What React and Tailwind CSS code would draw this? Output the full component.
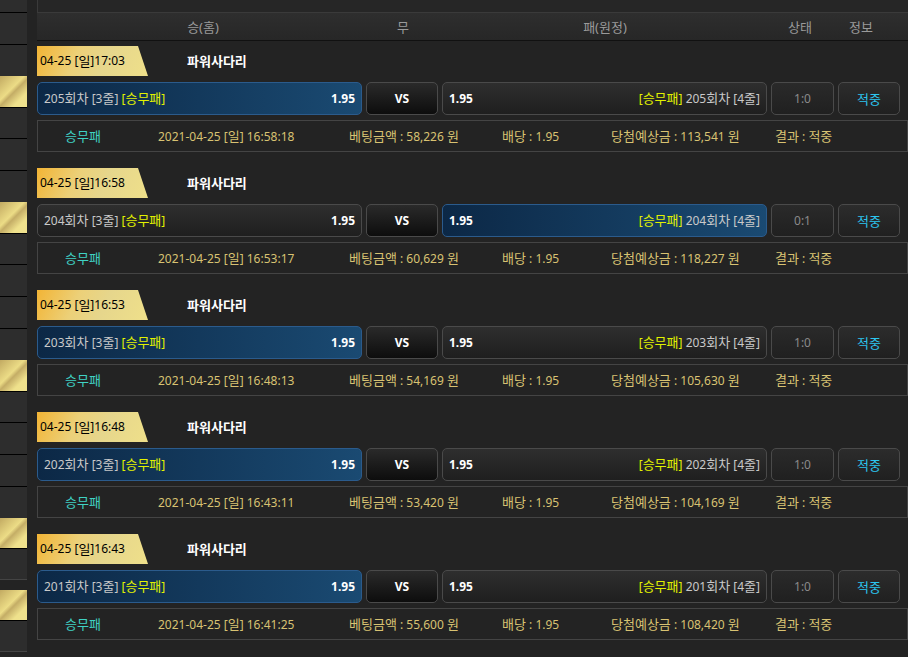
import React from 'react';

const side = [
  [12, 'g', 'b'], [31, 'g', 'b'], [31, 'g', null], [31, 'y', 'b'], [30, 'g', 'b'], [31, 'g', 'b'],
  [31, 'g', null], [31, 'y', 'b'], [30, 'g', 'b'], [31, 'g', 'b'], [31, 'g', 'b'], [31, 'g', null],
  [31, 'y', 'b'], [30, 'g', 'b'], [31, 'g', 'b'], [31, 'g', 'b'], [31, 'g', null], [30, 'y', 'b'],
  [30, 'g', 'l'], [10, 'd', null], [30, 'y', 'b'], [30, 'g', 'l'],
];

const matches = [
  { time: '04-25 [일]17:03', round: 205, pick: 'home', score: '1:0', at: '2021-04-25 [일] 16:58:18', bet: '58,226', win: '113,541' },
  { time: '04-25 [일]16:58', round: 204, pick: 'away', score: '0:1', at: '2021-04-25 [일] 16:53:17', bet: '60,629', win: '118,227' },
  { time: '04-25 [일]16:53', round: 203, pick: 'home', score: '1:0', at: '2021-04-25 [일] 16:48:13', bet: '54,169', win: '105,630' },
  { time: '04-25 [일]16:48', round: 202, pick: 'home', score: '1:0', at: '2021-04-25 [일] 16:43:11', bet: '53,420', win: '104,169' },
  { time: '04-25 [일]16:43', round: 201, pick: 'home', score: '1:0', at: '2021-04-25 [일] 16:41:25', bet: '55,600', win: '108,420' },
];

const sel = 'border-[#2b5b8c] bg-[linear-gradient(90deg,#0c2846_0%,#1a4a72_100%)]';
const off = 'border-[#4a4a4a] bg-[linear-gradient(180deg,#2e2e2e_0%,#1f1f1f_100%)]';

// hangul runs a touch larger than digits, like the original font
const K = ({ children }) =>
  String(children)
    .split(/([\uac00-\ud7a3]+)/)
    .map((s, i) => (/[\uac00-\ud7a3]/.test(s) ? <span key={i} className="text-[13px]">{s}</span> : s));

const App = () => {
  return (
    <div className="flex h-[657px] w-[908px] overflow-hidden bg-[#232323] text-[12px] leading-[16px] font-['Noto_Sans','Noto_Sans_CJK_KR',sans-serif]">
      {/* sidebar */}
      <div className="w-[27px] shrink-0 flex flex-col">
        {side.map(([h, t, b], i) => (
          <div
            key={i}
            style={{ height: h + (b ? 1 : 0) }}
            className={`shrink-0 ${t === 'g' ? 'bg-[#2d2d2d]' : t === 'y' ? 'bg-[linear-gradient(135deg,#c2aa62_0%,#ecdc86_42%,#c4ad66_52%,#efe18c_75%,#efe28e_100%)]' : 'bg-[#232323]'} ${b === 'b' ? 'border-b border-black' : b === 'l' ? 'border-b border-[#444]' : ''}`}
          />
        ))}
      </div>

      <div className="ml-[10px] flex-1 flex flex-col">
        <div className="h-[13px] shrink-0 border-l border-b border-[#3a3a3a] bg-[#262626]" />
        <div className="h-[28px] shrink-0 flex items-center border-b border-[#111] bg-[linear-gradient(180deg,#2e2e2e_0%,#272727_100%)] text-[#9a9a9a] text-[13px]">
          <div className="w-[332px] text-center">승(홈)</div>
          <div className="w-[68px] text-center">무</div>
          <div className="w-[336px] text-center">패(원정)</div>
          <div className="w-[54px] text-center">상태</div>
          <div className="w-[68px] text-center">정보</div>
        </div>

        {matches.map((m) => (
          <div key={m.round} className="mt-[5px] mb-[11px] shrink-0">
            <div className="h-[30px] flex items-center">
              <div className="h-full w-[111px] flex items-center pl-[3px] text-black bg-[linear-gradient(115deg,#f2b435_0%,#ecd078_35%,#e6d68c_60%,#efe08a_100%)] [clip-path:polygon(0_0,91%_0,100%_100%,0_100%)]">
                <K>{m.time}</K>
              </div>
              <div className="ml-[39px] text-white font-bold text-[13px]">파워사다리</div>
            </div>

            <div className="mt-[6px] h-[33px] flex gap-[4px]">
              <div className={`w-[325px] rounded-[5px] border flex items-center justify-between px-[6px] ${m.pick === 'home' ? sel : off}`}>
                <span className="text-[#c9c9c9]">
                  {m.round}<K>회차</K> [3<K>줄</K>] <span className="text-[#e2f200]">[<K>승무패</K>]</span>
                </span>
                <span className="text-white font-bold">1.95</span>
              </div>
              <div className="w-[72px] rounded-[5px] border border-[#4a4a4a] bg-[linear-gradient(180deg,#2a2a2a_0%,#0d0d0d_100%)] flex items-center justify-center text-white font-bold">
                VS
              </div>
              <div className={`w-[325px] rounded-[5px] border flex items-center justify-between px-[6px] ${m.pick === 'away' ? sel : off}`}>
                <span className="text-white font-bold">1.95</span>
                <span className="text-[#c9c9c9]">
                  <span className="text-[#e2f200]">[<K>승무패</K>]</span> {m.round}<K>회차</K> [4<K>줄</K>]
                </span>
              </div>
              <div className="w-[63px] rounded-[5px] border border-[#4a4a4a] bg-[linear-gradient(180deg,#2a2a2a_0%,#202020_100%)] flex items-center justify-center text-[#8a8a8a]">
                {m.score}
              </div>
              <div className="w-[62px] rounded-[5px] border border-[#4a4a4a] bg-[linear-gradient(180deg,#2c2c2c_0%,#202020_100%)] flex items-center justify-center text-[#2cc6f0] text-[13px]">
                적중
              </div>
            </div>

            <div className="mt-[5px] h-[32px] border border-[#444] flex items-center pl-[27px] text-[#d8c272]">
              <span className="w-[93px] text-[#40d2c4] text-[13px]">승무패</span>
              <span className="w-[191px]"><K>{m.at}</K></span>
              <span className="w-[153px]"><K>베팅금액</K> : {m.bet} <K>원</K></span>
              <span className="w-[109px]"><K>배당</K> : 1.95</span>
              <span className="w-[164px]"><K>당첨예상금</K> : {m.win} <K>원</K></span>
              <span><K>결과 : 적중</K></span>
            </div>
          </div>
        ))}
      </div>
    </div>
  );
};

export default App;
